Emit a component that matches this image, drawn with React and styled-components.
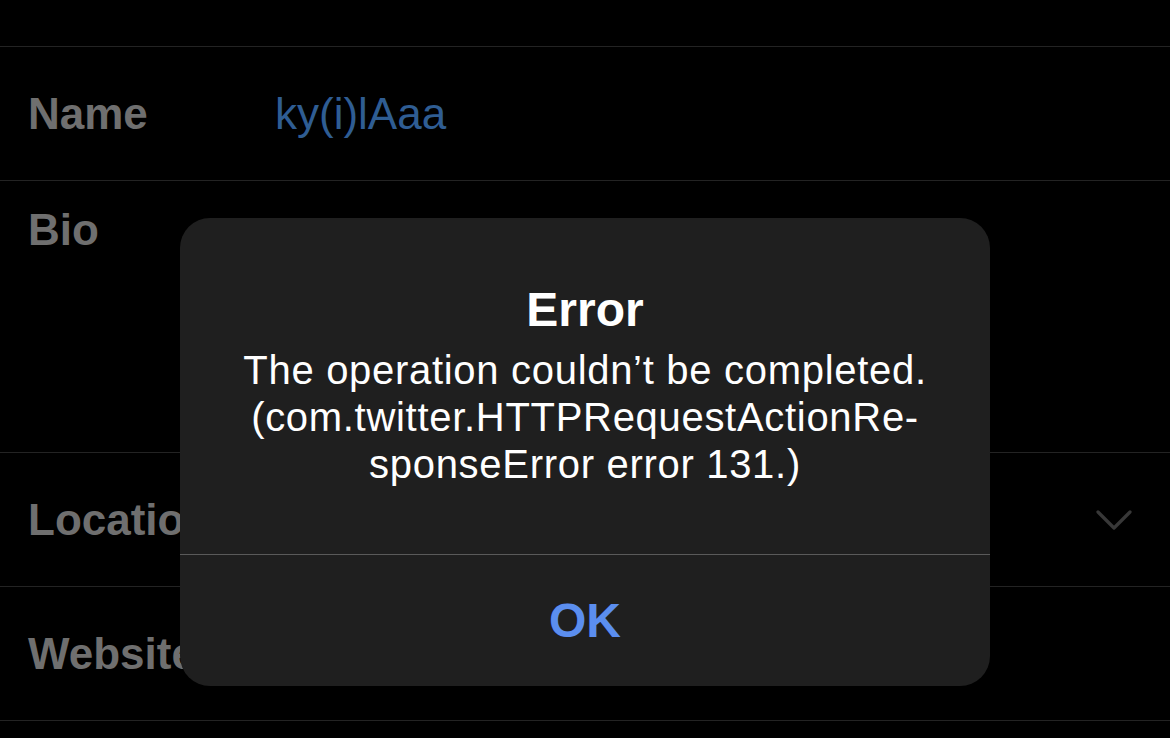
import styled, { createGlobalStyle } from "styled-components";

const GlobalStyle = createGlobalStyle`
  html, body {
    margin: 0;
    padding: 0;
    background: #000;
  }
  body {
    font-family: "Liberation Sans", Arial, sans-serif;
  }
`;

const Screen = styled.div`
  position: relative;
  width: 1170px;
  height: 738px;
  overflow: hidden;
  background: #000;
`;

const TopSpacer = styled.div`
  height: 46px;
  border-bottom: 1px solid #232323;
`;

const Row = styled.div`
  display: flex;
  align-items: ${(p) => (p.$tall ? "flex-start" : "center")};
  justify-content: space-between;
  height: ${(p) => (p.$tall ? "272px" : "134px")};
  padding: ${(p) => (p.$tall ? "23px 38px 0 28px" : "0 38px 0 28px")};
  box-sizing: border-box;
  border-bottom: 1px solid #232323;
`;

const Field = styled.div`
  display: flex;
  align-items: baseline;
`;

const Label = styled.span`
  width: 247px;
  font-size: 44px;
  font-weight: 700;
  color: #6f6f6f;
  line-height: 52px;
`;

const Value = styled.span`
  font-size: 44px;
  color: #2f5d93;
  line-height: 52px;
`;

const Chevron = () => (
  <svg width="36" height="22" viewBox="0 0 36 22">
    <polyline
      points="2,3 18,19 34,3"
      fill="none"
      stroke="#383838"
      strokeWidth="3.2"
      strokeLinecap="round"
      strokeLinejoin="round"
    />
  </svg>
);

const Alert = styled.div`
  position: absolute;
  left: 180px;
  top: 218px;
  width: 810px;
  height: 468px;
  border-radius: 30px;
  background: #1f1f1f;
  display: flex;
  flex-direction: column;
  overflow: hidden;
`;

const AlertBody = styled.div`
  flex: 1;
  display: flex;
  flex-direction: column;
  align-items: center;
  padding-top: 64px;
  border-bottom: 1px solid #5a5a5a;
  text-align: center;
`;

const AlertTitle = styled.div`
  font-size: 48px;
  font-weight: 700;
  color: #fff;
  line-height: 56px;
`;

const AlertMessage = styled.div`
  margin-top: 9px;
  font-size: 40px;
  letter-spacing: 0.7px;
  color: #fff;
  line-height: 47px;
`;

const AlertButton = styled.div`
  height: 131px;
  display: flex;
  align-items: center;
  justify-content: center;
  font-size: 48px;
  font-weight: 700;
  color: #5b8eef;
`;

export default function App() {
  return (
    <Screen>
      <GlobalStyle />
      <TopSpacer />
      <Row>
        <Field>
          <Label>Name</Label>
          <Value>ky(i)lAaa</Value>
        </Field>
      </Row>
      <Row $tall>
        <Field>
          <Label>Bio</Label>
        </Field>
      </Row>
      <Row>
        <Field>
          <Label>Location</Label>
        </Field>
        <Chevron />
      </Row>
      <Row>
        <Field>
          <Label>Website</Label>
        </Field>
      </Row>
      <Alert>
        <AlertBody>
          <AlertTitle>Error</AlertTitle>
          <AlertMessage>
            The operation couldn’t be completed.
            <br />
            (com.twitter.HTTPRequestActionRe-
            <br />
            sponseError error 131.)
          </AlertMessage>
        </AlertBody>
        <AlertButton>OK</AlertButton>
      </Alert>
    </Screen>
  );
}
